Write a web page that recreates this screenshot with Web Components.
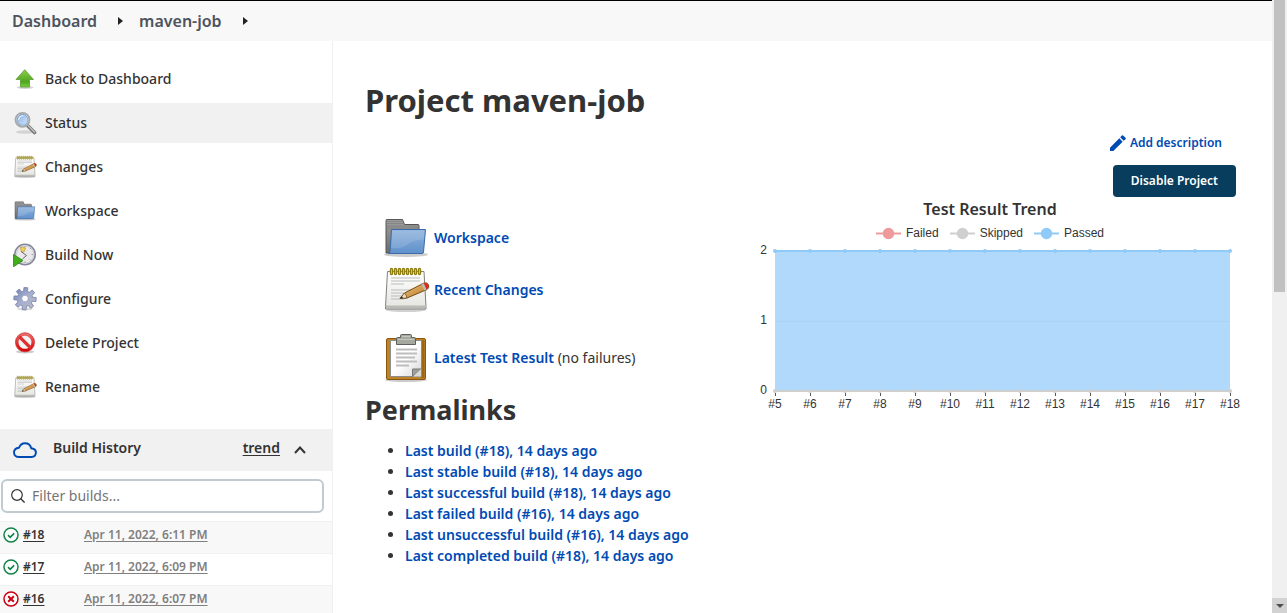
<!DOCTYPE html>
<html lang="en">
<head>
<meta charset="utf-8">
<title>maven-job [Jenkins]</title>
<style>
  html, body { margin: 0; }
  body { font: 14px/20px "Noto Sans", "Open Sans", sans-serif; color: #333; background: #fff; }
</style>
</head>
<body>
<jk-page></jk-page>

<script>
const define = (name, html, setup) => {
  const tpl = document.createElement('template');
  tpl.innerHTML = html;
  customElements.define(name, class extends HTMLElement {
    constructor() {
      super();
      this.attachShadow({ mode: 'open' }).append(tpl.content.cloneNode(true));
    }
    connectedCallback() { if (setup) setup(this.shadowRoot, this); }
  });
};

const NOTEPAD = `
  <defs>
    <linearGradient id="p" x1="0" y1="0" x2="0" y2="1"><stop offset="0" stop-color="#fff"/><stop offset="1" stop-color="#e4e4e0"/></linearGradient>
    <linearGradient id="w" x1="0" y1="0" x2="1" y2="1"><stop offset="0" stop-color="#f2c98a"/><stop offset="1" stop-color="#b5761d"/></linearGradient>
  </defs>
  <ellipse cx="24" cy="44" rx="20" ry="2" fill="#000" opacity=".18"/>
  <path d="M5.500 5.500h36.500l2 35v2.500h-40.500v-2.500z" fill="url(#p)" stroke="#81837e"/>
  <path d="M4 39.500h39.500v2.500h-39.500z" fill="#b9bbb6"/>
  <path d="M9 12h29M9 15h29M9 18h13M9 24h24M9 27h20M9 30h18M9 33h13" stroke="#bcbcbc" stroke-width="1.200"/>
  <g fill="#fff08a" stroke="#8f7f10" stroke-width="1.400">
    <rect x="8.500" y="2.500" width="2" height="6" rx="1"/><rect x="12.500" y="2.500" width="2" height="6" rx="1"/><rect x="16.500" y="2.500" width="2" height="6" rx="1"/><rect x="20.500" y="2.500" width="2" height="6" rx="1"/><rect x="24.500" y="2.500" width="2" height="6" rx="1"/><rect x="28.500" y="2.500" width="2" height="6" rx="1"/><rect x="32.500" y="2.500" width="2" height="6" rx="1"/><rect x="36.500" y="2.500" width="2" height="6" rx="1"/>
  </g>
  <path d="M18 32.500l4.500-5.500L42 17q3.500-1 4.500 2t-1.500 4.500L25 32z" fill="url(#w)" stroke="#7a4a12"/>
  <path d="M18 32.500l4.500-5.500q2 2 2.500 5z" fill="#efdcb8" stroke="#6b5030" stroke-width=".8"/>
  <path d="M18 32.500l2-2.300 1 2z" fill="#222"/>
  <path d="M39.500 18.300l2.800 6.200 2.200-1-2.900-6.200z" fill="#b8bcc0"/>
  <path d="M41.800 17.200q3.500-1 4.400 1.800t-1.700 4.200z" fill="#e4252b"/>`;

const FOLDER = `
  <defs>
    <linearGradient id="g" x1="0" y1="0" x2="0" y2="1"><stop offset="0" stop-color="#a0a0a0"/><stop offset="1" stop-color="#6c6c6c"/></linearGradient>
    <linearGradient id="b" x1="0" y1="0" x2="0" y2="1"><stop offset="0" stop-color="#8fb3dc"/><stop offset="1" stop-color="#5f91cb"/></linearGradient>
  </defs>
  <ellipse cx="24" cy="40.500" rx="22" ry="2.500" fill="#000" opacity=".2"/>
  <path d="M4 39V6.500q0-1 1-1h15.500l2 5H36q1 0 1 1V39z" fill="url(#g)" stroke="#555"/>
  <path d="M5 7.500h15M5 9.500h16M5 12h31M5 14h31" stroke="#7f7f7f" stroke-width=".8"/>
  <path d="M9.500 15.500h34l-2 22.500q-.1 1.500-1.500 1.500H6.500q1.300-.5 1.500-2z" fill="url(#b)" stroke="#3a6bab"/>
  <path d="M10.500 16.500h32l-.8 9Q30 26 25 31q-6 4-16 3z" fill="#fff" opacity=".13"/>`;

/* Eight-toothed cog outline centred on (cx, cy). */
const cog = (cx, cy, outer, inner) => {
  let d = '';
  for (let i = 0; i < 8; i++) {
    [[-.27, inner], [-.17, outer], [.17, outer], [.27, inner]].forEach(([off, r]) => {
      const a = i * Math.PI / 4 + off + Math.PI / 40;
      d += (d ? 'L' : 'M') + (cx + r * Math.sin(a)).toFixed(2) + ' ' + (cy - r * Math.cos(a)).toFixed(2);
    });
  }
  return d + 'z';
};

/* name: [viewBox, markup] */
const ICONS = {
  notepad: ['0 0 48 48', NOTEPAD],
  folder: ['0 0 48 48', FOLDER],
  clipboard: ['0 0 48 48', `
    <defs><linearGradient id="c" x1="0" y1="0" x2="1" y2="1"><stop offset=".5" stop-color="#fff"/><stop offset="1" stop-color="#d5d5d5"/></linearGradient></defs>
    <ellipse cx="24" cy="46" rx="21" ry="2" fill="#000" opacity=".2"/>
    <rect x="4.500" y="4.500" width="39" height="41" rx="1.500" fill="#c08228" stroke="#8a5710"/>
    <path d="M39 6h3.500v38h-3.500z" fill="#9d6717"/>
    <path d="M8.500 6.500h31v36h-31z" fill="url(#c)" stroke="#8c8c8c"/>
    <path d="M14 15.500h21M14 19.500h21M14 23.500h19M14 27.500h21M14 31.500h13" stroke="#bdbdbd" stroke-width="1.800"/>
    <path d="M30.500 42.500v-7.500h8.500z" fill="#9da099" stroke="#777"/><path d="M31 42.500l8-7.500v7.500z" fill="#d8dad4"/>
    <path d="M14.500 10.500v-6q0-1 1-1h3v-2q0-1 1-1h9q1 0 1 1v2h3q1 0 1 1v6h-19z" fill="#a5a89f" stroke="#5e615b"/>
    <path d="M16 5.500h16M20 2.500h8" stroke="#c4c7bf"/>`],
  up: ['0 0 24 24', `
    <defs><linearGradient id="u" x1="0" y1="0" x2="0" y2="1"><stop offset="0" stop-color="#8bd048"/><stop offset=".7" stop-color="#4fa51f"/><stop offset="1" stop-color="#75d43c"/></linearGradient></defs>
    <ellipse cx="12" cy="20.500" rx="8.500" ry="1.500" fill="#000" opacity=".18"/>
    <path d="M11.700 2.700l8.800 9.800h-4v7.500h-9v-7.500H3z" fill="url(#u)" stroke="#5b9b35" stroke-width=".8"/>`],
  search: ['0 0 24 24', `
    <defs><linearGradient id="s" x1="0" y1="0" x2="1" y2="1"><stop offset="0" stop-color="#86aee0"/><stop offset="1" stop-color="#d4e7fb"/></linearGradient></defs>
    <ellipse cx="12" cy="21" rx="9" ry="1.800" fill="#000" opacity=".12"/>
    <path d="M14.500 14.500l7 7" stroke="#777" stroke-width="3.600" stroke-linecap="round"/>
    <path d="M15 14.500l6.500 6.500" stroke="#bbb" stroke-width="1.600" stroke-linecap="round"/>
    <circle cx="9.500" cy="8.800" r="7" fill="#fff" stroke="#a6a8aa" stroke-width="1.800"/>
    <circle cx="9.500" cy="8.800" r="5.500" fill="url(#s)" stroke="#6c93c6" stroke-width=".8"/>
    <path d="M5.500 9q.5-4 5-4.500" stroke="#e5f0fc" stroke-width="1.200" fill="none"/>`],
  clock: ['0 0 24 24', `
    <circle cx="12" cy="11.500" r="10.200" fill="#eeeef0" stroke="#85859a" stroke-width="1.600"/>
    <circle cx="12" cy="11.500" r="8.700" fill="#e9e9ec" stroke="#c4c4cd" stroke-width=".8"/>
    <path d="M7.500 4l5 1-1.500 4-3-.8z" fill="#f1cf55" stroke="#b9932c" stroke-width=".6"/>
    <path d="M8 8.500l5.500 4-4 3.400" stroke="#666" stroke-width="1" fill="none"/>
    <path d="M18.500 11.500h1.500M12 3v1.500M12 18.500V20M17 16.500l1 1M17 6l1-1" stroke="#888" stroke-width=".8"/>
    <path d="M.5 11.500l9.500 6-9.500 6.300z" fill="#44ad1c" stroke="#2c8510" stroke-width=".8"/>`],
  gear: ['0 0 24 24', `
    <defs><linearGradient id="q" x1="0" y1="0" x2="1" y2="1"><stop offset="0" stop-color="#6f82b4"/><stop offset=".5" stop-color="#a6afd0"/><stop offset="1" stop-color="#b9bac6"/></linearGradient></defs>
    <ellipse cx="12" cy="22" rx="8" ry="1.500" fill="#000" opacity=".14"/>
    <path d="${cog(12, 11.7, 11.3, 7.7)}" fill="url(#q)" stroke="#7680a0" stroke-width=".8" stroke-linejoin="round"/>
    <circle cx="12" cy="11.500" r="3.200" fill="#fff" stroke="#8c94b4" stroke-width=".6"/>`],
  stop: ['0 0 24 24', `
    <defs><linearGradient id="r" x1="0" y1="0" x2="0" y2="1"><stop offset="0" stop-color="#e86a6a"/><stop offset="1" stop-color="#d40808"/></linearGradient></defs>
    <ellipse cx="12" cy="20.800" rx="9" ry="1.700" fill="#000" opacity=".2"/>
    <circle cx="12" cy="11.300" r="8" fill="#f2f2f2" stroke="url(#r)" stroke-width="3"/>
    <path d="M6.300 5.600l11.400 11.400" stroke="#dc3030" stroke-width="3.200"/>
    <circle cx="12" cy="11.300" r="9.600" fill="none" stroke="#c22" stroke-width=".7"/>`],
  cloud: ['0 0 24 16', `
    <path d="M6 15h12.500a4.300 4.300 0 0 0 1-8.500c-.6 0-1-.1-1.300-.2C17.500 3 15 1.200 12 1.200c-3 0-5 1.800-6 4.500C3 6 1 7.800 1 10.500 1 13 3 15 6 15z" fill="none" stroke="#004ab3" stroke-width="1.900" stroke-linejoin="round"/>`],
  chevron: ['0 0 12 8', `<path d="M1 7l5-5.500L11 7" fill="none" stroke="#333" stroke-width="2"/>`],
  lens: ['0 0 14 14', `<circle cx="6" cy="6" r="5.300" fill="none" stroke="#333" stroke-width="1.200"/><path d="M9.800 9.800l3.800 3.800" stroke="#333" stroke-width="1.300"/>`],
  ok: ['0 0 16 16', `<circle cx="8" cy="8" r="7" fill="#fff" stroke="#138347" stroke-width="1.500"/><path d="M5 8.200l2.200 2.200 3.900-4" fill="none" stroke="#138347" stroke-width="1.700"/>`],
  bad: ['0 0 16 16', `<circle cx="8" cy="8" r="7" fill="#fff" stroke="#cc0011" stroke-width="1.500"/><path d="M5.200 5.200l5.600 5.600M10.800 5.200l-5.600 5.600" stroke="#cc0011" stroke-width="2"/>`],
  pencil: ['0 0 24 24', `<path d="M0 19V24h5L19 10 14 5zM23.300 6.200a1.300 1.300 0 0 0 0-1.900L19.700.7a1.300 1.300 0 0 0-1.900 0L15.300 3.500 20.500 8.700z" fill="#004ab3"/>`],
  caret: ['0 0 5 8', `<path d="M0 0l5 4-5 4z" fill="#222"/>`],
  down: ['0 0 8 4', `<path d="M0 0h8l-4 4z" fill="#505050"/>`]
};

define('jk-icon', `
  <style>:host { display: block; flex: none; } svg { display: block; width: 100%; height: 100%; }</style>
  <svg aria-hidden="true"></svg>`, (root, el) => {
  const [box, markup] = ICONS[el.getAttribute('name')];
  const svg = root.querySelector('svg');
  svg.setAttribute('viewBox', box);
  svg.innerHTML = markup;
});

define('jk-breadcrumbs', `
  <style>
    :host { display: block; background: #f8f8f8; }
    nav { display: flex; align-items: center; height: 40px; padding-left: 12px; }
    a { color: #4d545d; font-size: 16px; font-weight: 600; text-decoration: none; }
    jk-icon { width: 5px; height: 8px; margin: 0 16px 0 21px; }
  </style>
  <nav aria-label="Breadcrumb">
    <a href="#dashboard">Dashboard</a><jk-icon name="caret"></jk-icon>
    <a href="#job">maven-job</a><jk-icon name="caret"></jk-icon>
  </nav>`);

define('jk-task', `
  <style>
    :host { display: block; }
    a { display: flex; align-items: center; gap: 8px; height: 40px; padding-left: 13px; color: #333; font-weight: 500; text-decoration: none; }
    :host([active]) a { background: #f1f1f1; }
  </style>
  <a href="#task"><slot name="icon"></slot><slot></slot></a>`);

define('jk-tasks', `
  <style>
    :host { display: block; padding: 18px 0 22px; }
    nav { display: flex; flex-direction: column; gap: 4px; }
    jk-icon { width: 24px; height: 24px; }
  </style>
  <nav aria-label="Project">
    <jk-task><jk-icon slot="icon" name="up"></jk-icon>Back to Dashboard</jk-task>
    <jk-task active><jk-icon slot="icon" name="search"></jk-icon>Status</jk-task>
    <jk-task><jk-icon slot="icon" name="notepad"></jk-icon>Changes</jk-task>
    <jk-task><jk-icon slot="icon" name="folder"></jk-icon>Workspace</jk-task>
    <jk-task><jk-icon slot="icon" name="clock"></jk-icon>Build Now</jk-task>
    <jk-task><jk-icon slot="icon" name="gear"></jk-icon>Configure</jk-task>
    <jk-task><jk-icon slot="icon" name="stop"></jk-icon>Delete Project</jk-task>
    <jk-task><jk-icon slot="icon" name="notepad"></jk-icon>Rename</jk-task>
  </nav>`);

define('jk-history', `
  <style>
    :host { display: block; }
    header { display: flex; align-items: center; height: 42px; padding: 0 26px 0 13px; background: #f1f1f1; }
    header jk-icon[name=cloud] { width: 24px; height: 16px; margin-right: 16px; }
    header jk-icon[name=chevron] { width: 12px; height: 8px; }
    h2 { flex: 1; margin: 0; padding-bottom: 4px; font-size: 14px; line-height: 20px; font-weight: 600; }
    header a { padding-bottom: 4px; margin-right: 14px; color: #333; font-weight: 600; text-underline-offset: 2px; }
    label { display: flex; align-items: center; gap: 7px; height: 30px; margin: 8px 8px 8px 1px; padding-left: 8px; border: 2px solid #bfcbd0; border-radius: 6px; }
    label jk-icon { width: 14px; height: 14px; }
    input { flex: 1; min-width: 0; border: 0; padding: 0; outline: 0; background: none; font: inherit; color: #333; }
    input::placeholder { color: #757575; opacity: 1; }
    table { width: 100%; border-collapse: collapse; font-size: 12px; }
    td { height: 31px; padding: 0; border-top: 1px solid #f1f1f1; vertical-align: top; }
    tr:nth-child(odd) { background: #f8f8f8; }
    td:first-child { width: 84px; }
    div { display: flex; align-items: center; gap: 4px; padding-left: 3px; }
    div, td:last-child a { height: 25px; line-height: 25px; }
    div jk-icon { width: 16px; height: 16px; }
    td a { color: #333; font-weight: 600; text-underline-offset: 2px; }
    td:last-child a { color: #808080; }
  </style>
  <header><jk-icon name="cloud"></jk-icon><h2>Build History</h2><a href="#trend">trend</a><jk-icon name="chevron"></jk-icon></header>
  <label><jk-icon name="lens"></jk-icon><input type="text" placeholder="Filter builds..." aria-label="Filter builds"></label>
  <table>
    <tr><td><div><jk-icon name="ok"></jk-icon><a href="#18">#18</a></div></td><td><a href="#18">Apr 11, 2022, 6:11 PM</a></td></tr>
    <tr><td><div><jk-icon name="ok"></jk-icon><a href="#17">#17</a></div></td><td><a href="#17">Apr 11, 2022, 6:09 PM</a></td></tr>
    <tr><td><div><jk-icon name="bad"></jk-icon><a href="#16">#16</a></div></td><td><a href="#16">Apr 11, 2022, 6:07 PM</a></td></tr>
  </table>`);

define('jk-shortcut', `
  <style>
    :host { display: flex; align-items: center; gap: 4px; height: 48px; }
    p { margin: 0; }
  </style>
  <slot name="icon"></slot><p><slot></slot></p>`);

define('jk-overview', `
  <style>
    :host { display: block; }
    .links { display: grid; gap: 4px; padding-left: 17px; margin: 0 0 11px; }
    .links jk-icon { width: 48px; height: 48px; }
    .links jk-shortcut:last-child { margin-top: 16px; }
    a { color: #004ab3; font-weight: 600; text-decoration: none; }
    h2 { margin: 0 0 13px; font-size: 27px; line-height: 34px; font-weight: 700; }
    ul { margin: 0; padding-left: 40px; line-height: 21px; }
  </style>
  <div class="links">
    <jk-shortcut><jk-icon slot="icon" name="folder"></jk-icon><a href="#ws">Workspace</a></jk-shortcut>
    <jk-shortcut><jk-icon slot="icon" name="notepad"></jk-icon><a href="#changes">Recent Changes</a></jk-shortcut>
    <jk-shortcut><jk-icon slot="icon" name="clipboard"></jk-icon><a href="#tests">Latest Test Result</a> (no failures)</jk-shortcut>
  </div>
  <h2>Permalinks</h2>
  <ul>
    <li><a href="#18">Last build (#18), 14 days ago</a></li>
    <li><a href="#18">Last stable build (#18), 14 days ago</a></li>
    <li><a href="#18">Last successful build (#18), 14 days ago</a></li>
    <li><a href="#16">Last failed build (#16), 14 days ago</a></li>
    <li><a href="#16">Last unsuccessful build (#16), 14 days ago</a></li>
    <li><a href="#18">Last completed build (#18), 14 days ago</a></li>
  </ul>`);

define('jk-trend', `
  <style>
    :host { display: block; }
    h3 { margin: 0; font-size: 16px; line-height: 24px; font-weight: 600; text-align: center; }
    ul { display: flex; justify-content: center; gap: 11px; margin: 2px 0 0; padding: 0; list-style: none; font: 12px/20px "Liberation Sans", sans-serif; }
    li { display: flex; align-items: center; gap: 5px; }
    li svg { width: 25px; height: 14px; }
    svg { display: block; }
    .plot { width: 100%; height: auto; overflow: visible; font: 12px "Liberation Sans", sans-serif; }
  </style>
  <h3>Test Result Trend</h3>
  <ul></ul>
  <svg class="plot" viewBox="0 -2 500 174" role="img" aria-label="Passed tests per build"></svg>`, root => {
  root.querySelector('ul').innerHTML = [['Failed', '#ef9a9a'], ['Skipped', '#cfcfcf'], ['Passed', '#90caf9']].map(([t, c]) =>
    `<li><svg viewBox="0 0 25 14"><path d="M0 7.500h25" stroke="${c}" stroke-width="2"/><circle cx="12.500" cy="7.500" r="5.700" fill="${c}"/></svg>${t}</li>`).join('');
  let s = `<path d="M35 6h455v140H35z" fill="#b1d9fb"/><path d="M35 76.500h455" stroke="#a8d3f6"/><path d="M35 6h455" stroke="#90caf9" stroke-width="2"/><path d="M35 146h455" stroke="#cfcfcf" stroke-width="2"/>`;
  for (let i = 0; i < 14; i++) {
    const x = 35 + i * 35;
    s += `<circle cx="${x}" cy="6" r="2" fill="#90caf9"/><circle cx="${x}" cy="146" r="2" fill="#cfcfcf"/><path d="M${x}.5 148v3" stroke="#555"/><text x="${x}" y="163" text-anchor="middle" fill="#333">#${i + 5}</text>`;
  }
  for (let v = 0; v < 3; v++) s += `<text x="27" y="${149 - v * 70}" text-anchor="end" fill="#333">${v}</text>`;
  root.querySelector('.plot').innerHTML = s;
});

define('jk-project', `
  <style>
    :host { display: block; padding: 39px 32px 0; }
    h1 { margin: 0; font-size: 31px; line-height: 40px; font-weight: 700; }
    .cols { display: grid; grid-template-columns: minmax(0, 1fr) 500px; }
    jk-overview { margin-top: 94px; }
    aside { display: flex; flex-direction: column; align-items: flex-end; padding-top: 13px; }
    a { display: flex; align-items: center; gap: 4px; margin: 0 18px 12px 0; line-height: 20px; color: #004ab3; font-size: 12px; font-weight: 600; text-decoration: none; }
    a jk-icon { width: 16px; height: 16px; }
    button { height: 32px; margin: 0 4px 0 0; padding: 0 18px; border: 0; border-radius: 4px; background: #083d5d; color: #fff; font: 600 12px/20px "Noto Sans", "Open Sans", sans-serif; }
    jk-trend { width: 100%; }
  </style>
  <h1>Project maven-job</h1>
  <div class="cols">
    <jk-overview></jk-overview>
    <aside>
      <a href="#edit"><jk-icon name="pencil"></jk-icon>Add description</a>
      <button type="button">Disable Project</button>
      <jk-trend></jk-trend>
    </aside>
  </div>`);

define('jk-scrollbar', `
  <style>
    :host { display: flex; flex-direction: column; background: #f0f0f0; }
    .thumb { height: 292px; margin: 0 2px; background: #c1c1c1; }
    .down { display: grid; place-items: center; height: 15px; margin-top: auto; background: #d2d2d2; }
    jk-icon { width: 8px; height: 4px; }
  </style>
  <div class="thumb"></div><div class="down"><jk-icon name="down"></jk-icon></div>`);

define('jk-page', `
  <style>
    :host { display: grid; grid-template-columns: minmax(0, 1fr) 15px; height: 100vh; overflow: hidden; }
    .view { overflow: hidden; }
    jk-breadcrumbs { border-top: 1px solid #000; }
    .body { display: grid; grid-template-columns: 333px minmax(0, 1fr); min-height: 100vh; }
    .side { border-right: 1px solid #f1f1f1; }
  </style>
  <div class="view">
    <jk-breadcrumbs></jk-breadcrumbs>
    <div class="body">
      <div class="side"><jk-tasks></jk-tasks><jk-history></jk-history></div>
      <jk-project></jk-project>
    </div>
  </div>
  <jk-scrollbar></jk-scrollbar>`);
</script>
</body>
</html>
